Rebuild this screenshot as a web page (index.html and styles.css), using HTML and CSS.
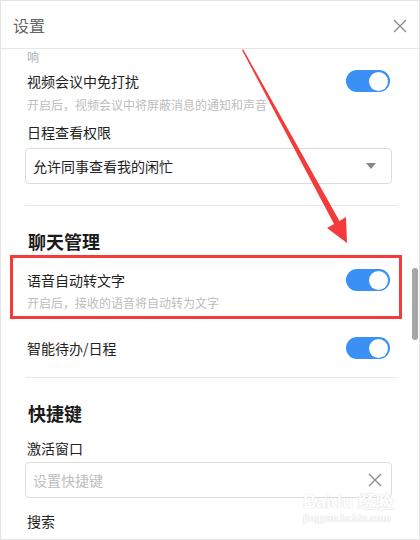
FILE: index.html
```html
<html>
<head>
<meta charset="utf-8">
<link rel="stylesheet" href="styles.css">
</head>
<body>
<div class="window">
    <!-- title bar -->
    <div class="header">
        <span class="title">设置</span>
        <svg class="close" width="14" height="14" viewBox="0 0 14 14"><path d="M1 1L13 13M13 1L1 13" stroke="#8a8a8a" stroke-width="1.3" fill="none"/></svg>
    </div>

    <div class="body">
        <div class="content">
            <div class="desc first">响</div>

            <div class="row">
                <span class="label">视频会议中免打扰</span>
                <span class="toggle"><i></i></span>
            </div>
            <div class="desc">开启后，视频会议中将屏蔽消息的通知和声音</div>

            <div class="label field-label">日程查看权限</div>
            <div class="select">
                <span>允许同事查看我的闲忙</span>
                <span class="caret"></span>
            </div>

            <div class="divider"></div>

            <!-- chat -->
            <h2 class="section">聊天管理</h2>
            <div class="row voice">
                <span class="label">语音自动转文字</span>
                <span class="toggle"><i></i></span>
            </div>
            <div class="desc tight">开启后，接收的语音将自动转为文字</div>

            <div class="row todo">
                <span class="label">智能待办/日程</span>
                <span class="toggle"><i></i></span>
            </div>

            <div class="divider second"></div>

            <!-- shortcuts -->
            <h2 class="section">快捷键</h2>
            <div class="label field-label">激活窗口</div>
            <div class="select input">
                <span class="placeholder">设置快捷键</span>
                <svg width="14" height="14" viewBox="0 0 14 14"><path d="M1 1L13 13M13 1L1 13" stroke="#8a8a8a" stroke-width="1.3" fill="none"/></svg>
            </div>
            <div class="label field-label">搜索</div>
        </div>
        <div class="scrollbar"><div class="thumb"></div></div>
    </div>

    <!-- annotations over the screenshot -->
    <div class="mark"></div>
    <svg class="arrow" width="420" height="540" viewBox="0 0 420 540">
        <polygon points="243,49 339.5,221 346,217 347,243 327,228 334,224 242.2,50.5" fill="#f33b3b"/>
    </svg>
    <div class="watermark">
        <div class="wm-logo">Bai<span>du</span> 经验</div>
        <div class="wm-url">jingyan.baidu.com</div>
    </div>
</div>
</body>
</html>
```

FILE: styles.css
```css
* {
    margin: 0;
    padding: 0;
    box-sizing: border-box;
}

body {
    background: #fff;
    font-family: "Noto Sans CJK SC", "Noto Sans", sans-serif;
}

.window {
    position: relative;
    width: 420px;
    height: 540px;
    border: 1px solid #e3e3e3;
    overflow: hidden;
    background: #fff;
}

.header {
    height: 48px;
    border-bottom: 1px solid #e6e6e6;
    display: flex;
    align-items: center;
    justify-content: space-between;
    padding: 0 12px 0 12px;
}

.header .title {
    font-size: 16px;
    color: #666;
    line-height: 20px;
}

.header .close {
    margin-top: 2px;
}

.body {
    display: flex;
    height: 490px;
}

.content {
    flex: 1;
    padding: 0 12px 0 24px;
}

.label {
    font-size: 14px;
    line-height: 20px;
    color: #222;
    padding-left: 2px;
}

.desc {
    font-size: 12px;
    line-height: 16px;
    color: #bdbdbd;
    padding-left: 2px;
    margin-top: 5px;
}

.desc.first {
    margin-top: 0;
    color: #a9b0bb;
}

.desc.tight {
    margin-top: 4px;
}

.row {
    height: 22px;
    margin-top: 5px;
    display: flex;
    align-items: center;
    justify-content: space-between;
    padding-right: 8px;
}

.row.voice {
    margin-top: 16px;
}

.row.todo {
    margin-top: 26px;
}

.toggle {
    width: 44px;
    height: 22px;
    border-radius: 11px;
    background: #3a90f5;
    display: flex;
    align-items: center;
    justify-content: flex-end;
    padding-right: 2px;
}

.toggle i {
    width: 19px;
    height: 19px;
    border-radius: 50%;
    background: #fff;
}

.field-label {
    margin-top: 9px;
}

.select {
    height: 36px;
    margin-top: 6px;
    margin-right: 6px;
    border: 1px solid #dcdcdc;
    border-radius: 4px;
    display: flex;
    align-items: center;
    justify-content: space-between;
    padding: 0 14px 0 7px;
    font-size: 14px;
    color: #222;
}

.caret {
    width: 0;
    height: 0;
    border-left: 5px solid transparent;
    border-right: 5px solid transparent;
    border-top: 6px solid #888;
    margin-right: 1px;
}

.divider {
    height: 1px;
    background: #e8e8e8;
    margin-top: 21px;
}

.divider.second {
    margin-top: 18px;
}

.section {
    font-size: 18px;
    line-height: 24px;
    font-weight: bold;
    color: #1a1a1a;
    padding-left: 3px;
    margin-top: 23px;
}

.select.input {
    margin-top: 4px;
    padding-right: 9px;
}

.select.input + .field-label {
    margin-top: 13px;
}

.section + .field-label {
    margin-top: 13px;
}

.placeholder {
    color: #bdbdbd;
}

.scrollbar {
    width: 9px;
    padding-right: 1px;
    display: flex;
    justify-content: flex-end;
}

.thumb {
    width: 6px;
    height: 72px;
    margin-top: 219px;
    border-radius: 3px;
    background: #a6a6a6;
}

.mark {
    position: absolute;
    left: 9px;
    top: 254px;
    width: 392px;
    height: 64px;
    border: 3px solid #f33b3b;
}

.arrow {
    position: absolute;
    left: -1px;
    top: -1px;
}

.watermark {
    position: absolute;
    left: 302px;
    top: 490px;
    color: #fff;
    text-shadow: 0 0 1px #d6d6d6, 0 0 1px #d6d6d6;
    font-family: "Liberation Sans", sans-serif;
    font-weight: bold;
}

.wm-logo {
    font-size: 18px;
    line-height: 22px;
}

.wm-url {
    font-size: 10px;
    line-height: 12px;
}
```
